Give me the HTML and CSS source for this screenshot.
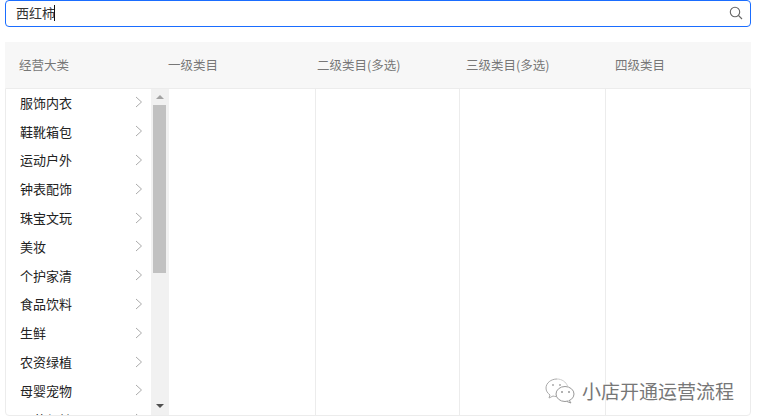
FILE: index.html
```html
<!DOCTYPE html>
<html lang="zh">
<head>
<meta charset="utf-8">
<title>经营类目</title>
<link rel="stylesheet" href="styles.css">
</head>
<body>
<div class="page">
  <div class="search">
    <span class="search-text">西红柿</span><span class="caret"></span>
    <svg class="search-icon" width="14" height="14" viewBox="0 0 14 14"><circle cx="6" cy="6" r="4.7" fill="none" stroke="#666" stroke-width="1.1"/><path d="M9.5 9.5L13 13" stroke="#666" stroke-width="1.1" fill="none"/></svg>
  </div>
  <div class="head">
    <div class="head-cell">经营大类</div>
    <div class="head-cell">一级类目</div>
    <div class="head-cell">二级类目(多选)</div>
    <div class="head-cell">三级类目(多选)</div>
    <div class="head-cell">四级类目</div>
  </div>
  <div class="panel">
    <div class="col-main">
      <ul class="list">
        <li class="item">服饰内衣<svg class="chev" width="8" height="12" viewBox="0 0 8 12"><path d="M1 1l5.500 5L1 11" fill="none" stroke="#aaa" stroke-width="1"/></svg></li>
        <li class="item">鞋靴箱包<svg class="chev" width="8" height="12" viewBox="0 0 8 12"><path d="M1 1l5.500 5L1 11" fill="none" stroke="#aaa" stroke-width="1"/></svg></li>
        <li class="item">运动户外<svg class="chev" width="8" height="12" viewBox="0 0 8 12"><path d="M1 1l5.500 5L1 11" fill="none" stroke="#aaa" stroke-width="1"/></svg></li>
        <li class="item">钟表配饰<svg class="chev" width="8" height="12" viewBox="0 0 8 12"><path d="M1 1l5.500 5L1 11" fill="none" stroke="#aaa" stroke-width="1"/></svg></li>
        <li class="item">珠宝文玩<svg class="chev" width="8" height="12" viewBox="0 0 8 12"><path d="M1 1l5.500 5L1 11" fill="none" stroke="#aaa" stroke-width="1"/></svg></li>
        <li class="item">美妆<svg class="chev" width="8" height="12" viewBox="0 0 8 12"><path d="M1 1l5.500 5L1 11" fill="none" stroke="#aaa" stroke-width="1"/></svg></li>
        <li class="item">个护家清<svg class="chev" width="8" height="12" viewBox="0 0 8 12"><path d="M1 1l5.500 5L1 11" fill="none" stroke="#aaa" stroke-width="1"/></svg></li>
        <li class="item">食品饮料<svg class="chev" width="8" height="12" viewBox="0 0 8 12"><path d="M1 1l5.500 5L1 11" fill="none" stroke="#aaa" stroke-width="1"/></svg></li>
        <li class="item">生鲜<svg class="chev" width="8" height="12" viewBox="0 0 8 12"><path d="M1 1l5.500 5L1 11" fill="none" stroke="#aaa" stroke-width="1"/></svg></li>
        <li class="item">农资绿植<svg class="chev" width="8" height="12" viewBox="0 0 8 12"><path d="M1 1l5.500 5L1 11" fill="none" stroke="#aaa" stroke-width="1"/></svg></li>
        <li class="item">母婴宠物<svg class="chev" width="8" height="12" viewBox="0 0 8 12"><path d="M1 1l5.500 5L1 11" fill="none" stroke="#aaa" stroke-width="1"/></svg></li>
        <li class="item">医药保健<svg class="chev" width="8" height="12" viewBox="0 0 8 12"><path d="M1 1l5.500 5L1 11" fill="none" stroke="#aaa" stroke-width="1"/></svg></li>
      </ul>
      <div class="scrollbar">
        <span class="arrow-up"></span>
        <div class="thumb"></div>
        <span class="arrow-down"></span>
      </div>
    </div>
    <div class="col col-1"></div>
    <div class="col col-2"></div>
    <div class="col col-3"></div>
  </div>
  <div class="watermark">
    <svg class="wm-icon" width="32" height="28" viewBox="0 0 32 28"><path d="M13 2C7 2 2 6 2 11c0 3 1.500 5 4 7l-1 3 4-2c1 .3 2 .5 3 .5" fill="none" stroke="#aaa" stroke-width="1"/><path d="M13 2c5 0 9 3 10.500 7" fill="none" stroke="#ccc" stroke-width="1"/><ellipse cx="21" cy="17" rx="9" ry="7.500" fill="#fff" stroke="#999" stroke-width="1"/><path d="M25 23l2 3-4-1.500" fill="#fff" stroke="#999" stroke-width="1"/><circle cx="9" cy="8" r="1" fill="#aaa"/><circle cx="16" cy="8" r="1" fill="#aaa"/><circle cx="18" cy="15" r="1" fill="#999"/><circle cx="25" cy="15" r="1" fill="#999"/></svg>
    <span class="wm-text">小店开通运营流程</span>
  </div>
</div>
</body>
</html>
```
FILE: styles.css
```css
* { box-sizing: border-box; }
html, body { margin: 0; padding: 0; background: #fff; }
body { font-family: "Noto Sans CJK SC", "Liberation Sans", sans-serif; overflow: hidden; }
.page { position: relative; width: 768px; height: 419px; padding: 0 17px 0 5px; overflow: hidden; }
.search { display: flex; align-items: center; height: 27px; padding: 0 7px 1px 10px; border: 1px solid #1a6dff; border-radius: 4px; font-size: 13px; color: #333; }
.search-text { line-height: 24px; margin-right: -1px; }
.caret { width: 1px; height: 16px; background: #111; }
.search-icon { margin-left: auto; }
.head { display: flex; height: 46px; margin-top: 15px; background: #f7f7f7; }
.head-cell { width: 149px; padding-left: 14px; font-size: 12.500px; line-height: 46px; color: #777; white-space: nowrap; }
.panel { display: flex; height: 328px; border: 1px solid #ececec; border-radius: 0 0 4px 4px; overflow: hidden; }
.col-main { display: flex; width: 163px; flex: none; }
.list { width: 145px; margin: -1px 0 0; padding: 0; list-style: none; overflow: hidden; height: 327px; }
.item { display: flex; align-items: center; justify-content: space-between; height: 28.800px; padding: 0 8px 0 14px; font-size: 13px; color: #222; }
.chev { flex: none; }
.scrollbar { position: relative; width: 18px; background: #f1f1f1; }
.thumb { width: 13px; height: 168px; margin: 16px 0 0 2px; background: #c1c1c1; }
.arrow-up, .arrow-down { position: absolute; left: 5px; width: 0; height: 0; border-left: 4px solid transparent; border-right: 4px solid transparent; }
.arrow-up { top: 6px; border-bottom: 4px solid #a3a3a3; }
.arrow-down { bottom: 7px; border-top: 4px solid #505050; }
.col { height: 100%; border-right: 1px solid #ececec; }
.col-1 { width: 147px; }
.col-2 { width: 144px; }
.col-3 { width: 146px; }
.watermark { position: absolute; left: 544px; top: 377px; display: flex; align-items: center; gap: 6px; }
.wm-text { font-size: 19px; line-height: 28px; color: #777; text-shadow: 0 0 2px #fff, 0 0 2px #fff; white-space: nowrap; }
.wm-icon { flex: none; }
```
